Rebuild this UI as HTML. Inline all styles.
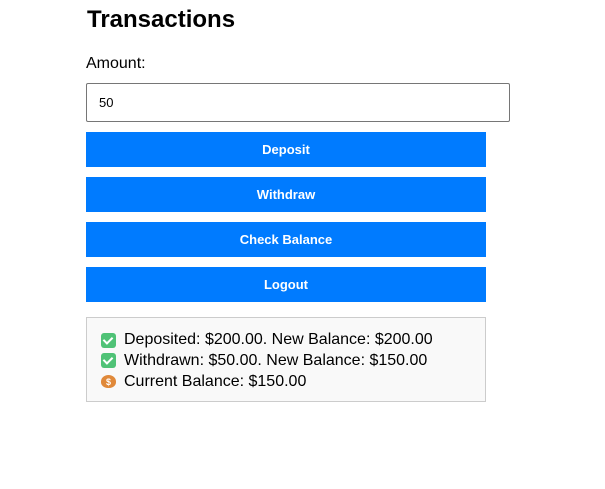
<!DOCTYPE html>
<html><head><style>
body{margin:0;font-family:"Liberation Sans",Arial,sans-serif;background:#fff;}
h2{position:absolute;left:87px;top:6px;margin:0;font-size:24px;font-weight:bold;}
.lbl{position:absolute;left:86px;top:55px;font-size:16px;}
.inp{position:absolute;left:86px;top:83px;width:422px;height:37px;border:1px solid #767676;border-radius:2px;font-size:13px;line-height:37px;}
.inp span{position:absolute;left:12px;}
.btn{position:absolute;left:86px;width:400px;height:35px;background:#007bff;color:#fff;font-size:13px;font-weight:bold;text-align:center;line-height:35px;}
.out{position:absolute;left:86px;top:317px;width:398px;height:83px;background:#f9f9f9;border:1px solid #ccc;font-size:16px;}
.l{position:absolute;left:37px;}
.ck{position:absolute;left:14px;width:15px;height:15px;background:#4fc276;border-radius:3px;}
.ck:after{content:"";position:absolute;left:4px;top:2px;width:4px;height:7px;border:solid #fff;border-width:0 2px 2px 0;transform:rotate(45deg);}
.bag{position:absolute;left:14px;width:15px;height:13px;background:#e0893a;border-radius:50% 50% 45% 45%;color:#fff;font-size:9px;text-align:center;line-height:14px;font-weight:bold;}
</style></head><body>
<h2>Transactions</h2>
<div class="lbl">Amount:</div>
<div class="inp"><span>50</span></div>
<div class="btn" style="top:132px">Deposit</div>
<div class="btn" style="top:177px">Withdraw</div>
<div class="btn" style="top:222px">Check Balance</div>
<div class="btn" style="top:267px">Logout</div>
<div class="out">
<div class="ck" style="top:15px"></div><div class="l" style="top:13px">Deposited: $200.00. New Balance: $200.00</div>
<div class="ck" style="top:35px"></div><div class="l" style="top:34px">Withdrawn: $50.00. New Balance: $150.00</div>
<div class="bag" style="top:57px">$</div><div class="l" style="top:55px">Current Balance: $150.00</div>
</div>
</body></html>
